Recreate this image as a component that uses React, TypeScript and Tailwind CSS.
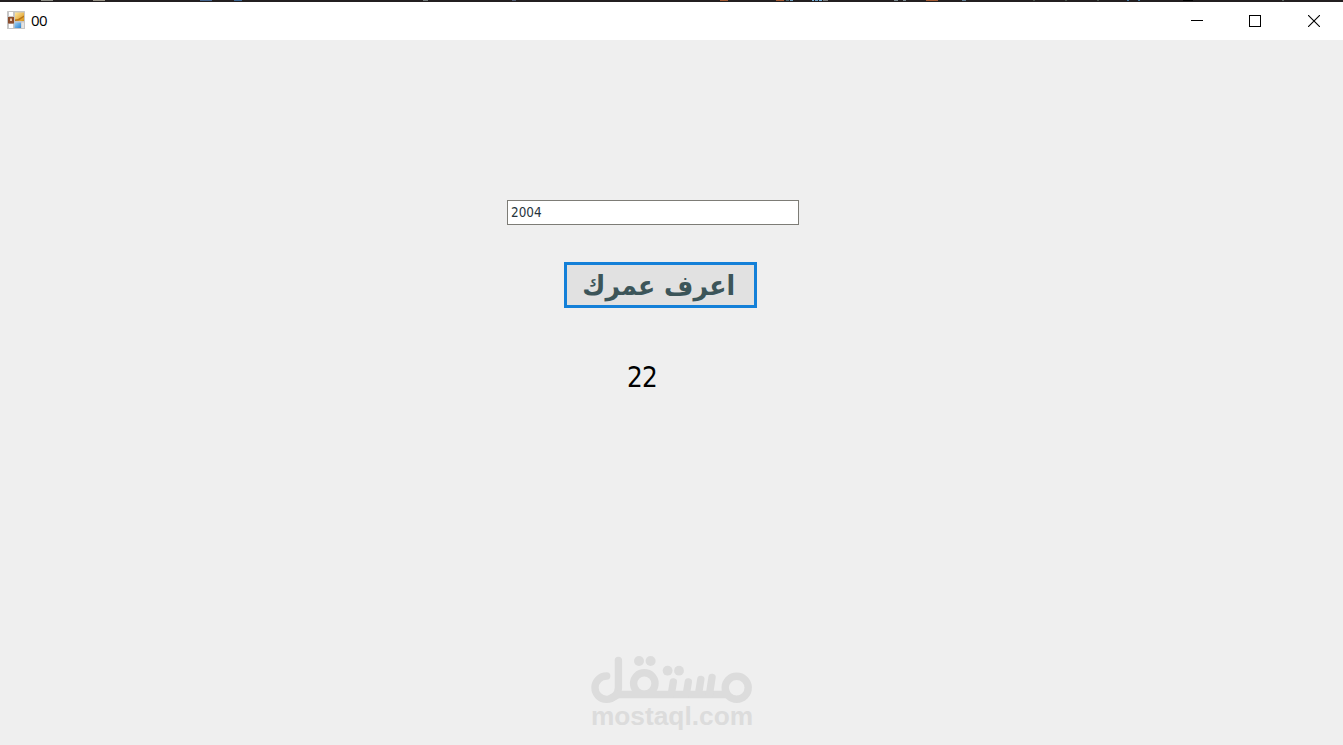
import { useState } from "react";

// Slivers of the taskbar icons that show above the window: [x, width, color]
const specks: [number, number, string][] = [
	[41, 12, "#8f8f87"],
	[93, 12, "#989387"],
	[200, 12, "#45658f"],
	[234, 8, "#3d6590"],
	[423, 5, "#6f7777"],
	[512, 4, "#4f5a70"],
	[720, 8, "#a35a32"],
	[776, 8, "#a35a32"],
	[786, 3, "#49606a"],
	[790, 3, "#6fa0c0"],
	[812, 2, "#79b1d8"],
	[815, 3, "#6b9dc4"],
	[819, 3, "#79b1d8"],
	[823, 5, "#77797a"],
	[894, 4, "#77868c"],
	[903, 3, "#77868c"],
	[926, 12, "#a35a32"],
	[962, 4, "#5f7b90"],
	[1033, 2, "#465048"],
	[1065, 2, "#465048"],
	[1097, 2, "#465048"],
	[1127, 2, "#44759e"],
	[1138, 2, "#44759e"],
	[1183, 10, "#000000"],
	[1282, 2, "#56605b"],
];

function TaskbarEdge() {
	return (
		<svg className="block h-0.5 w-full shrink-0 bg-[#231f20]" width="1343" height="2" shapeRendering="crispEdges" aria-hidden>
			{specks.map(([x, width, color]) => (
				<rect key={x} x={x} y="0" width={width} height="1" fill={color} />
			))}
		</svg>
	);
}

function FormIcon() {
	return (
		<svg className="block" width="18" height="18" viewBox="0 0 18 18" aria-hidden>
			<defs>
				<linearGradient id="gold" x1="0" y1="0" x2="1" y2="1">
					<stop offset="0" stopColor="#ffe7a0" />
					<stop offset="1" stopColor="#d99213" />
				</linearGradient>
				<linearGradient id="sky" x1="0" y1="0" x2="1" y2="1">
					<stop offset="0" stopColor="#9bd0f5" />
					<stop offset="1" stopColor="#2c83cf" />
				</linearGradient>
			</defs>
			<rect width="18" height="18" rx="0.5" fill="#c6c6c6" />
			<rect x="2" y="1" width="4" height="4" fill="#fff" />
			<rect x="2" y="13" width="4" height="4" fill="#fff" />
			<rect x="8" y="1.5" width="9" height="8.5" fill="url(#gold)" />
			<path d="M8 8.5 L11 8 L17 4.5 V6 L12 9.5 L8 10Z" fill="#b97516" />
			<rect x="1" y="6" width="6" height="6.5" fill="#8b4c2c" />
			<rect x="3" y="7.5" width="2" height="2.5" fill="#e9c8ae" />
			<rect x="7.5" y="11.5" width="6.5" height="5.5" fill="url(#sky)" />
			<rect x="14.5" y="11.5" width="2.5" height="5.5" fill="#e4e4e4" />
		</svg>
	);
}

function TitleBar() {
	return (
		<header className="flex h-[38px] shrink-0 items-center justify-between bg-white">
			<div className="flex items-center gap-[6px] pb-[2px] pl-[7px]">
				<FormIcon />
				<h1 className="font-['Open_Sans',sans-serif] text-[15px] leading-5 tracking-[-0.6px] text-black">00</h1>
			</div>
			<div className="flex items-center">
				<button aria-label="Minimize" className="flex h-[38px] w-[58px] items-center justify-center">
					<svg width="12" height="12" shapeRendering="crispEdges">
						<rect y="5" width="12" height="1" />
					</svg>
				</button>
				<button aria-label="Maximize" className="flex h-[38px] w-[58px] items-center justify-center">
					<svg width="12" height="12" shapeRendering="crispEdges">
						<rect x="0.5" y="0.5" width="11" height="11" fill="none" stroke="#000" />
					</svg>
				</button>
				<button aria-label="Close" className="flex h-[38px] w-[59px] items-center justify-center">
					<svg width="12" height="12">
						<path d="M0 0 L12 12 M12 0 L0 12" stroke="#000" strokeWidth="1.1" />
					</svg>
				</button>
			</div>
		</header>
	);
}

function Watermark() {
	return (
		<div className="flex w-[162px] flex-col items-center">
			<svg className="block" width="162" height="48" viewBox="0 0 162 48" fill="none" stroke="#dcdcdc" strokeWidth="7.4" strokeLinecap="round" aria-label="مستقل">
				<circle cx="145.7" cy="31.7" r="11.5" />
				<circle cx="53.3" cy="27.5" r="10.7" />
				<path d="M15.7 20 A11.7 11.7 0 1 0 27.4 32 V4.5" />
				<path d="M19 42.7 Q24 40 27.4 38.5 H139" strokeLinecap="butt" />
				<path d="M82.3 26 L80.3 38 M97.3 26 L95.3 38 M109.8 23.5 L107.5 38 M121 21.5 L118.5 38" />
				<g fill="#dcdcdc" stroke="none">
					<circle cx="48" cy="5" r="5" />
					<circle cx="59.6" cy="5" r="5" />
					<circle cx="76.6" cy="14.7" r="4.9" />
					<circle cx="88" cy="14.7" r="4.9" />
				</g>
			</svg>
			<span className="font-['Liberation_Sans',sans-serif] text-[26.3px] leading-[24px] font-bold whitespace-nowrap text-[#dcdcdc]">mostaql.com</span>
		</div>
	);
}

export default function App() {
	const [year, setYear] = useState("2004");

	return (
		<div className="flex h-[745px] w-[1343px] flex-col overflow-hidden bg-[#efefef]">
			<TaskbarEdge />
			<TitleBar />
			<main className="flex flex-1 flex-col items-start pt-40">
				<input
					value={year}
					onChange={(e) => setYear(e.target.value)}
					className="ml-[507px] h-[25px] w-[292px] border border-[#7d7c76] bg-white px-[3px] font-['DejaVu_Sans_Condensed','DejaVu_Sans',sans-serif] text-[13.4px] text-[#26343c] outline-none"
				/>
				<button className="mt-[37px] ml-[564px] flex h-[46px] w-[193px] items-center justify-center border-[3px] border-[#1480d8] bg-[#e1e1e1] pr-1 font-['DejaVu_Sans',sans-serif] text-[27px] leading-none font-bold text-[#3c5559]">
					<span dir="rtl" className="inline-block scale-x-[0.935] whitespace-nowrap">اعرف عمرك</span>
				</button>
				<output className="mt-[53px] ml-[627px] font-['DejaVu_Sans_Condensed','DejaVu_Sans',sans-serif] text-[27.5px] leading-8 tracking-[-0.8px] text-black">22</output>
				<div className="mt-[263px] ml-[591px]">
					<Watermark />
				</div>
			</main>
		</div>
	);
}
